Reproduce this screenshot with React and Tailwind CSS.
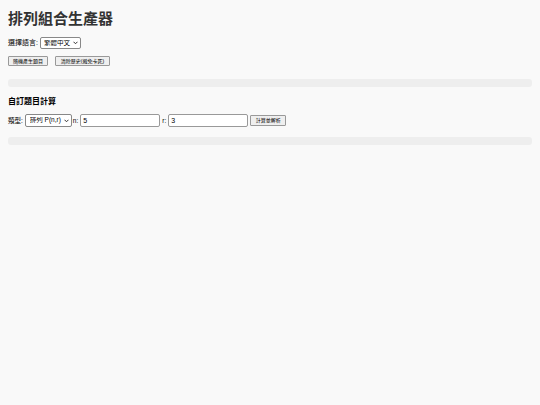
import React, { useState } from 'react';

const font = { fontFamily: '"Liberation Sans", "Noto Sans CJK TC", sans-serif' };

const Chevron = () => (
    <svg
        className="pointer-events-none absolute right-[3px] top-1/2 -translate-y-1/2"
        width="5"
        height="4"
        viewBox="0 0 10 7"
        fill="none"
        stroke="#333"
        strokeWidth="2"
    >
        <path d="M1 1l4 4 4-4" />
    </svg>
);

const App = () => {
    const [lang, setLang] = useState('zh-TW');
    const [type, setType] = useState('P');
    const [n, setN] = useState('5');
    const [r, setR] = useState('3');

    return (
        <div className="min-h-screen w-full bg-[#f9f9f9] px-2 pt-[9px] text-black" style={font}>
            <h1 className="text-[15px] font-bold leading-[20px] text-[#333]">排列組合生產器</h1>

            <div className="mt-[8px] flex h-[12px] items-center gap-[2px] text-[7px]">
                <span>選擇語言:</span>
                <div className="relative">
                    <select
                        value={lang}
                        onChange={(e) => setLang(e.target.value)}
                        className="block h-[12px] w-[41px] appearance-none rounded-[2px] border border-[#888] bg-white pl-[3px] text-[6.5px] leading-none"
                    >
                        <option value="zh-TW">繁體中文</option>
                        <option value="en">English</option>
                    </select>
                    <Chevron />
                </div>
            </div>

            <div className="mt-[7px] flex h-[10px] items-center gap-[7px]">
                <button className="h-[10px] w-[40px] rounded-[1px] border border-[#999] bg-[#efefef] text-[5px] leading-none">
                    隨機產生題目
                </button>
                <button className="h-[10px] w-[55px] rounded-[1px] border border-[#999] bg-[#efefef] text-[5px] leading-none">
                    清除歷史(避免卡死)
                </button>
            </div>

            <div className="mt-[13px] h-[8px] w-full rounded-[3px] bg-[#eeeeee]" />

            <h2 className="mt-[9px] text-[8px] font-bold leading-[12px]">自訂題目計算</h2>

            <div className="mt-[6px] flex h-[13px] items-center text-[6.5px]">
                <span className="mr-[2px]">類型:</span>
                <div className="relative">
                    <select
                        value={type}
                        onChange={(e) => setType(e.target.value)}
                        className="block h-[13px] w-[47px] appearance-none rounded-[2px] border border-[#888] bg-white pl-[4px] text-[6.5px] leading-none"
                    >
                        <option value="P">排列 P(n,r)</option>
                        <option value="C">組合 C(n,r)</option>
                    </select>
                    <Chevron />
                </div>
                <span className="ml-[1px] mr-[2px]">n:</span>
                <input
                    value={n}
                    onChange={(e) => setN(e.target.value)}
                    className="h-[13px] w-[80px] rounded-[2px] border border-[#999] bg-white px-[2px] text-[7px]"
                />
                <span className="ml-[2px] mr-[2px]">r:</span>
                <input
                    value={r}
                    onChange={(e) => setR(e.target.value)}
                    className="h-[13px] w-[80px] rounded-[2px] border border-[#999] bg-white px-[2px] text-[7px]"
                />
                <button className="ml-[2px] h-[11px] w-[36px] rounded-[1px] border border-[#999] bg-[#efefef] text-[5px] leading-none">
                    計算並解析
                </button>
            </div>

            <div className="mt-[10px] h-[8px] w-full rounded-[3px] bg-[#eeeeee]" />
        </div>
    );
};

export default App;
